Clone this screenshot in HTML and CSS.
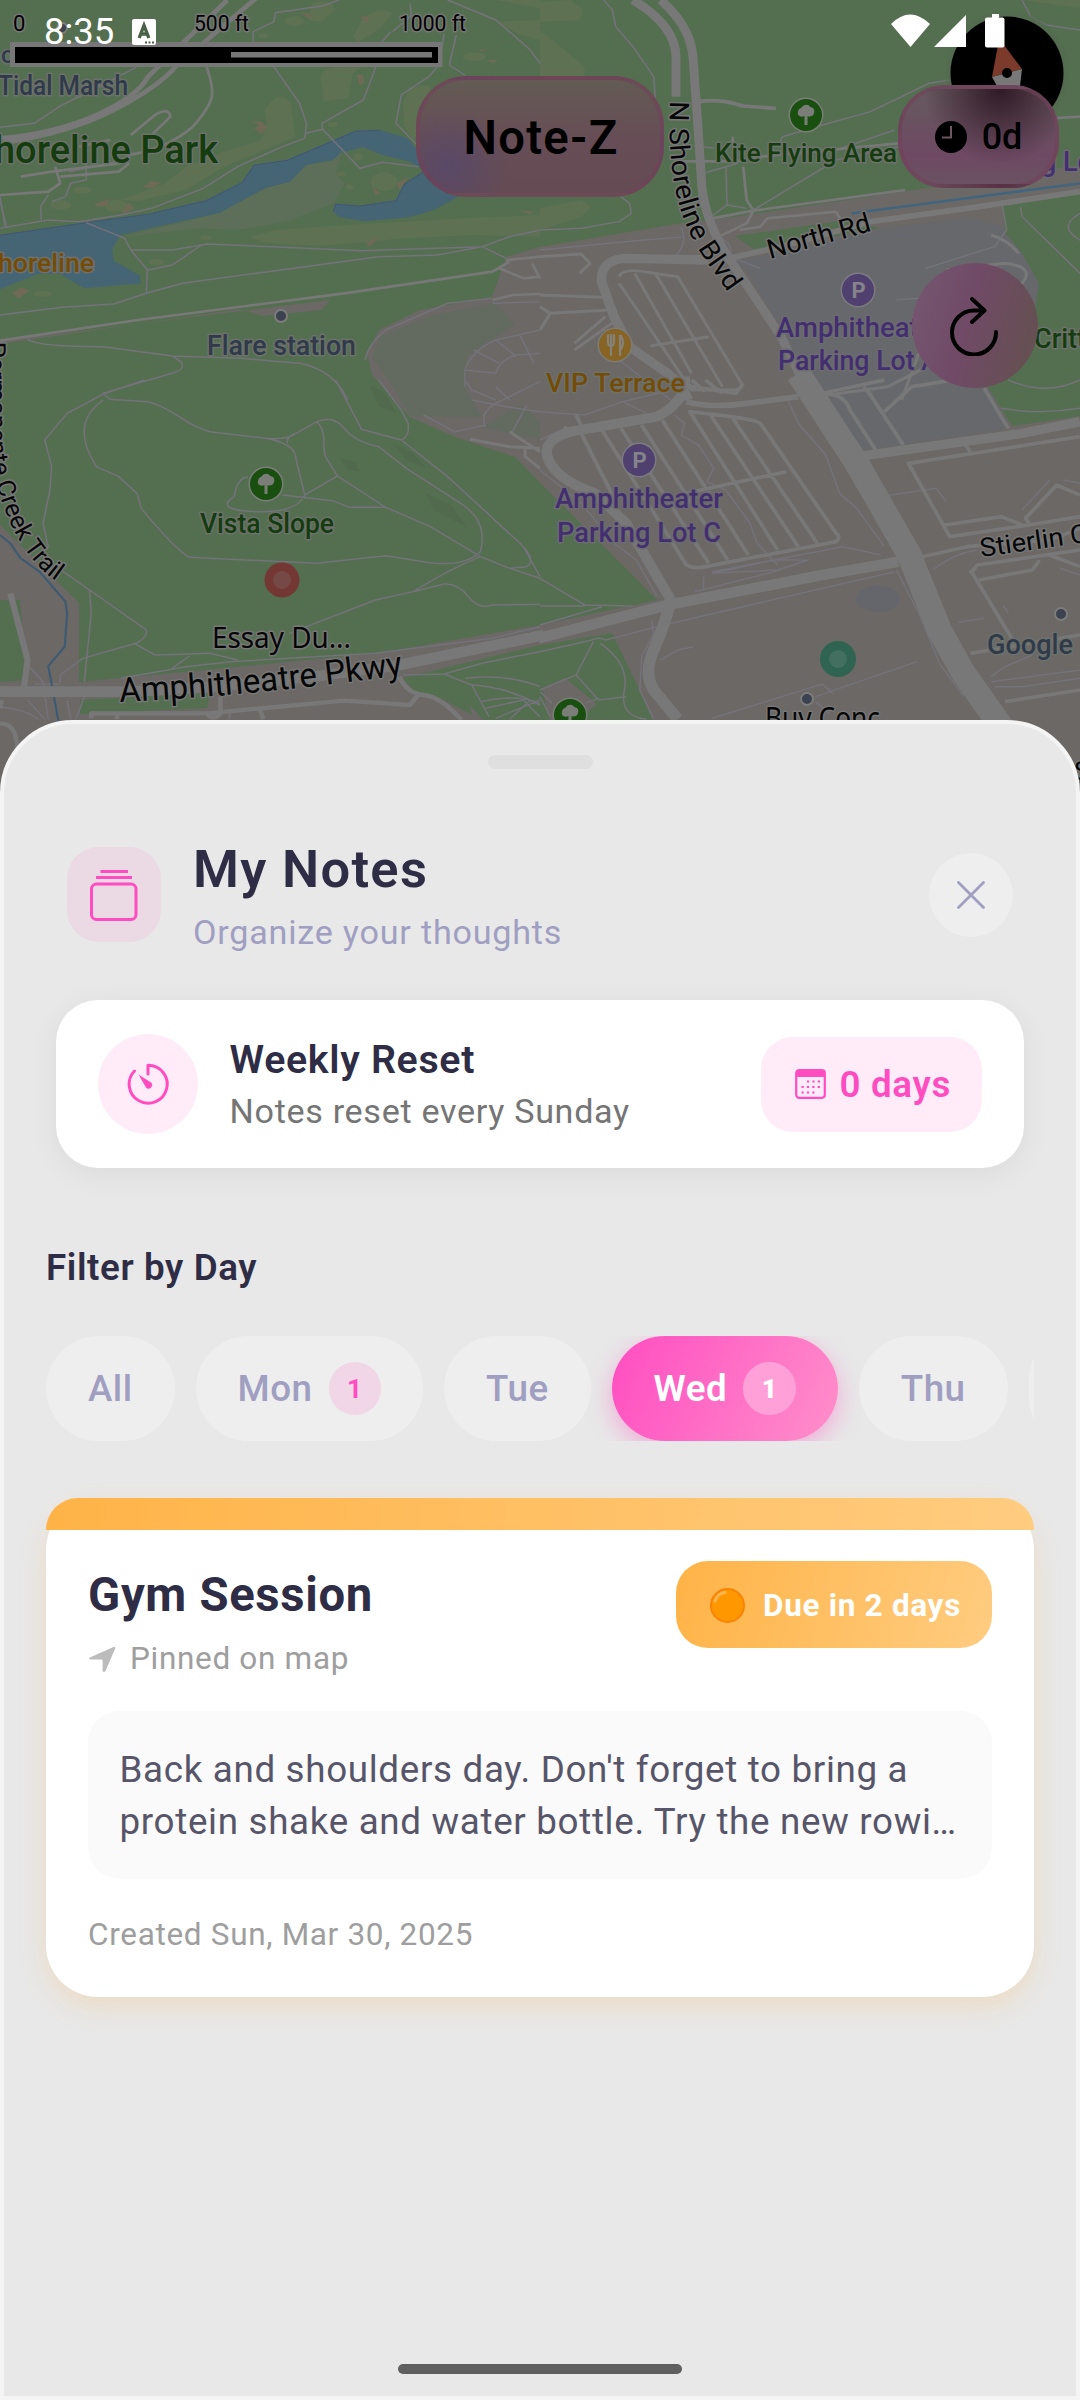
FILE: index.html
```html
<!DOCTYPE html>
<html lang="en">
<head>
<meta charset="utf-8">
<title>Note-Z</title>
<link rel="stylesheet" href="styles.css">
</head>
<body>
<div class="screen">
  <svg class="map" width="1080" height="800" viewBox="0 0 1080 800">
    <defs>
      <path id="blvd" d="M670 101C668 150 672 190 685 222S708 262 736 304"/>
      <path id="pkwy" d="M120 702C200 698 290 691 408 674"/>
      <path id="creek" d="M-13 290L-11 440C-9 480 12 552 56 581"/>
      <g id="tree"><circle r="17.5" fill="#7b7d79"/><circle r="16" fill="#1a500f"/><path d="M-1.5 10V1C-6 3-9 0-8-3-8-7-4-7-4-8-2-11 3-11 4-8 8-8 9-4 8-2 7 2 3 2 1.500 1V10z" fill="#7b7d79"/></g>
      <g id="park"><circle r="17.500" fill="#7b7b80"/><circle r="16" fill="#504070"/></g>
    </defs>
    <rect width="1080" height="800" fill="#546f50"/>

    <!-- built-up ground -->
    <g fill="#6b6865">
      <path d="M506 257L540 247 676 224 733 217 1080 165V800H485L470 705 415 692 403 678 120 682 0 682V525L79 603V682L379 653 540 625 657 600 540 483 515 457 455 437 410 417 372 375 367 352 379 330 420 310 492 297z"/>
      <path d="M0 682H80L403 678 485 722 490 800H0z"/>
      <path d="M0 341L330 300 322 310 262 316 240 309 0 344z"/>
    </g>
    <path d="M0 600L20 600 26 680 0 682z" fill="#546f50"/>
    <path d="M80 700L210 693 207 708 80 714z" fill="#546f50"/>
    <path d="M403 678L540 645 612 633 655 722H485L470 705 415 692z" fill="#546f50"/>
    <path d="M542 688L565 678 597 704 575 722H550z" fill="#6b6865"/>
    <path d="M735 236L840 221 880 228 755 250z" fill="#546f50"/>
    <path d="M735 262L885 228 970 218 1005 227 1022 250 1039 283 1040 320 988 387 1010 428 855 452 745 268z" fill="#66686b"/>
    <path d="M1002 203L1080 193V416L1012 426 988 387 1030 340 1039 283 1022 253 1005 233z" fill="#546f50"/>
    <path d="M380 337L430 316 496 303 515 325 468 355 466 390 482 417 410 416 392 385 372 358z" fill="#636b61"/>
    <path d="M482 427L520 405 540 420V440L511 433z" fill="#636b61"/>
    <ellipse cx="878" cy="599" rx="22" ry="13" fill="#64666b"/>

    <!-- water -->
    <g transform="scale(.34436 .33333)">
      <path d="M0 706L250 668 430 643 598 602 704 547 738 496 835 481 966 423 1032 394 1105 391 1180 413 1240 480 1340 585 1260 630 1188 652 1060 664 985 652 968 635 975 613 1045 618 1150 602 1175 552 1235 512 1190 485 1110 465 1055 442 1000 455 965 480 890 495 842 546 770 565 640 638 350 705 326 748 330 782 405 826 410 850 245 865 175 822 110 822 0 868z" fill="#456474"/>
      <path d="M995 450L968 482 890 495 842 546 770 565 640 638 360 710 580 685 690 690 830 665 970 610 1000 550 975 520z" fill="#5d6f59"/>
      <g fill="#5e7153">
        <path d="M770 330Q810 260 845 310L858 410 780 445 650 500 540 570 400 603 350 600 480 550 540 500 650 455 760 420 775 370z"/>
        <path d="M930 230Q935 200 1000 200L1060 195 1025 220 1010 295 940 303z"/>
        <path d="M1050 60Q1100 15 1140 40L1100 90 1040 125 1025 110z"/>
        <path d="M1170 310Q1190 240 1250 260L1230 370 1200 420 1175 380z"/>
        <path d="M725 712L800 690 1050 672 1350 655 1568 645V710L1370 705 1180 715 930 738 770 728z"/>
        <path d="M905 10Q960-10 972 30L935 65 895 60z"/>
        <path d="M1445 65L1568 60V120L1500 100z"/>
        <path d="M1440 0H1568V25z"/>
        <ellipse cx="176" cy="615" rx="32" ry="14"/><ellipse cx="337" cy="617" rx="34" ry="18"/><ellipse cx="1115" cy="545" rx="38" ry="28"/><ellipse cx="238" cy="570" rx="28" ry="10"/><ellipse cx="855" cy="63" rx="28" ry="15"/><ellipse cx="1378" cy="170" rx="34" ry="13"/><ellipse cx="598" cy="713" rx="18" ry="7"/><ellipse cx="455" cy="786" rx="22" ry="9"/><ellipse cx="123" cy="882" rx="27" ry="9"/><ellipse cx="967" cy="374" rx="15" ry="7"/><ellipse cx="1040" cy="470" rx="13" ry="11"/><ellipse cx="990" cy="522" rx="14" ry="7"/><ellipse cx="1015" cy="561" rx="13" ry="8"/><ellipse cx="765" cy="107" rx="14" ry="8"/>
      </g>
      <g fill="#6e6a56">
        <path d="M272 612L318 597 310 617 285 620zM352 635L375 608 390 625 365 640zM415 560L440 543 468 548 440 565zM727 362L760 365 775 380 760 402 738 385 752 375zM1035 225L1055 225 1058 245 1045 258zM1045 50L1072 48 1068 70zM870 35L910 45 895 55zM1385 150L1415 148 1400 155zM1415 180L1448 180 1430 190zM1080 560L1105 580 1090 585zM1150 550L1188 530 1160 570zM1062 725L1102 712 1075 740zM35 880L60 862 87 872 55 895zM1510 630L1555 635 1535 643z"/>
      </g>
      <path d="M0 706L250 668 430 643 598 602 704 547 738 496 835 481 966 423 1032 394 1105 391M968 635L975 613 1045 618 1150 602 1175 552 1235 512" fill="none" stroke="#41567a" stroke-width="3"/>

      <!-- footpaths -->
      <g class="path">
        <path d="M0 382L100 370 180 315 270 270 395 202M795 200L870 310 890 370 885 415 820 440 690 500 590 565 440 625 350 645 230 665 140 660 0 685"/>
        <path d="M888 400L937 388 935 370 1055 300 1090 205M985 0L935 18 800 38 795 65 735 95 735 125M1135 95L1088 150 1090 205M1190 10L1195 45 1140 95M1325 105L1305 195 1350 225M1300 0L1440 60 1540 150 1568 190M1290 100L1275 195 1245 230 1165 285 1150 370 1225 450M937 388L1045 505 1110 487 1215 500"/>
        <path d="M120 660L118 620 140 585M150 605L190 590 205 550 250 540M0 590L15 680M250 668L362 715 380 750 428 810 425 880M380 750L500 750 600 732 1050 752 1400 740 1480 710 1568 690M585 735L500 795 430 810M0 945L180 922 330 912 425 880 530 850 1100 770 1270 765 1400 740 1470 775"/>
        <path d="M80 1018Q110 1040 300 1040L500 1068Q560 1100 500 1120L300 1180M500 1068L700 1075 870 1090Q970 1110 1010 1200M1060 1080Q1070 1030 1120 990L1300 910 1430 895M1350 1110Q1370 1050 1440 1020L1568 990M1350 1110V1160M1440 1120Q1450 1080 1500 1065L1568 1060M1350 1110L1440 1120M1375 1050L1450 1090M1440 1020L1500 1070M1510 1005L1550 1090M1430 910L1568 905"/>
        <path d="M250 440V540M0 600L20 685M360 480L200 515"/>
      </g>
      <g class="road">
        <path d="M0 415Q160 400 280 345T430 230L660 0M0 430Q200 400 330 330T510 200L760-20" stroke-width="14"/>
        <path d="M600 200Q620 260 615 290T560 380Q480 450 370 465M380 405L450 345Q490 320 495 350L430 415M60 530L150 515 345 490Q390 480 370 440M0 585L140 575 175 550 160 500M175 530L345 515 375 490M230 440L320 420" stroke-width="8"/>
        <path d="M0 1022L400 960 1000 880 1430 815 1480 785M1470 780L1568 770M1450 805L1520 835 1568 830M1545 790L1568 835M1430 900L1490 885 1568 882" stroke-width="8"/>
      </g>
    </g>

    <!-- north-east quarter -->
    <g transform="translate(540 0) scale(.34436 .33333)">
      <g fill="#5e7153"><path d="M0 5L90 0 125 30 115 60 0 65zM0 90L130 200 130 228 0 228zM0 625L120 600 150 620 120 650 0 690z"/><path d="M860 0H1568V25L1400 0z"/></g>
      <g class="path">
        <path d="M185 0L210 30 220 80 270 140 330 230 335 300M1190 240L1130 250 960 335 820 375 705 410 690 440M0 690L120 685 230 665 265 640 260 610 235 590M470 440L505 445M475 520L540 500 575 490M620 630L860 480 1040 440M1400 0L1425 50 1470 75 1568 90M540 500L543 615 490 655M543 615L600 625M860 450L1030 390M0 750L300 720 410 712M395 765Q430 730 410 680M500 700Q570 730 550 770L640 805M1340 600L1355 690 1320 740 1120 805M1395 620L1400 650 1568 820M1568 640Q1500 680 1568 720M1035 900L1100 895M1360 1140Q1470 1190 1568 1140M230 1080L380 1200"/>
      </g>
      <path d="M905 640L1568 550" stroke="#3f6580" stroke-width="7" fill="none"/>
      <g class="road">
        <path d="M270 0Q400 80 395 180L395 290M350 0Q440 80 445 180L460 400 470 560Q480 660 540 760L700 1010 800 1220" stroke-width="26"/>
        <path d="M460 305Q520 295 590 318L685 325" stroke-width="11"/>
        <path d="M410 484H570L640 470 1040 430M590 500L600 600 620 632 600 670 520 710M500 655L620 632 1060 570M1480 355L1568 350M860 635L870 655M560 410V440M580 690L640 680 660 655 860 635" stroke-width="8"/>
        <path d="M550 775L700 740 960 665 1240 625 1568 575" stroke-width="17"/>
        <path d="M490 780L250 775Q170 780 180 850L215 950 260 1040 370 1120Q420 1160 430 1200" stroke-width="28"/>
        <path d="M230 830Q240 800 330 820L400 830 585 1150Q590 1170 560 1170L440 1170 230 850M275 820L440 1120M335 820L530 1160M320 1038L490 1010M0 770L120 762 145 790 115 820M0 885L180 892M0 920L30 940 200 930M30 940L0 990M100 1030L190 950M215 965L100 1050M800 1190L1010 1160 1200 1060M1100 1060L1050 1200M1310 705Q1360 720 1390 760M1180 810L1350 790Q1440 800 1400 850L1300 840M940 1160L970 1200" stroke-width="9"/>
      </g>
    </g>

    <!-- south-west quarter -->
    <g transform="translate(0 380) scale(.34436 .33333)">
      <g fill="#51694c"><path d="M1075 15L1120 40 1150 98 1100 80zM1140 190L1200 220 1235 262 1180 240zM985 235L1030 245 1045 275 1010 268zM1235 340L1310 375 1355 440 1260 390z"/></g>
      <g class="path">
        <path d="M420 0L300 42 195 100 130 180 150 260 145 330 125 430 140 500 120 520M300 42L320 58 430 65Q470 75 520 110T610 155L770 175Q840 180 860 160L920 125Q970 105 1000 145T1100 200L1180 265 1330 365Q1420 420 1395 515Q1350 560 1250 548L1120 527 920 550 550 532Q510 510 410 385L398 340 345 290 280 260Q200 130 300 60M770 175Q860 190 860 240L885 345Q860 400 740 395T680 350Q690 290 720 292M835 190Q830 170 860 160M920 125Q945 150 940 200 L945 230 980 288 885 345M820 345L965 362 1015 382 1120 382M980 288L1120 382 1250 440 1395 530 1480 565 1568 595M975 0L1000 50 1050 148 1165 180Q1190 170 1185 130L1165 90 1100 0M1165 180L1300 290 1510 490Q1560 540 1530 560L1480 565M1520 500L1568 590M1395 530Q1300 570 1200 635L1090 660 890 740 840 760M1200 635L1290 612Q1330 610 1360 650 T1430 675L1568 673M170 565L260 630 425 750Q430 770 395 790L240 835 175 885V910M390 790L450 825 610 820 690 840M500 865L550 828M260 630L265 700 245 905M350 895L540 860 670 845 1090 820 1430 775 1568 740M1170 885L1290 882 1400 850 1568 815M1290 882L1370 915 1420 1010M1370 915Q1470 920 1568 975M1350 895Q1470 880 1568 920M1395 965Q1500 940 1568 970M1410 985L1520 960 1568 1010M1440 1015L1568 960M1480 1018L1540 960"/>
        <path d="M85 860L125 905 140 1018M80 960L130 1018M0 980Q80 990 110 1018M195 960L205 1018M245 950L220 1018M100 912L170 912M670 990L665 1018"/>
        <path d="M1230 105L1320 155 1410 135M1350 0L1370 30 1440 60M1410 140Q1390 100 1440 70L1568 5M1370 60L1470 80 1568 95M1485 160L1530 75M1440 20L1480 60"/>
      </g>
      <path d="M0 465L30 490 60 535 115 575 190 665 195 700 188 800 140 858 155 940 170 1025" stroke="#3c5a74" stroke-width="6" fill="none"/>
      <g class="road">
        <path d="M0 935H360Q700 925 1160 855L1580 765" stroke-width="32"/>
        <path d="M30 640L80 840 70 920" stroke-width="18"/>
        <path d="M265 1015V1000H600L1000 962 1190 975 1215 945M640 950V1000Q620 1025 600 1000M1160 890Q1180 940 1230 945 T1340 1020M755 990L765 1018M340 1000V1018M5 960L0 985M0 1030Q50 1030 50 1110" stroke-width="13"/>
        <path d="M1365 178L1480 200 1568 205M1480 155L1568 215M1525 205V230L1568 265" stroke-width="9"/>
      </g>
    </g>

    <!-- south-east quarter -->
    <g transform="translate(540 380) scale(.34436 .33333)">
      <g class="path">
        <path d="M0 95L130 105 240 65 360 35M240 65L310 100M0 180L60 150M0 270L120 370 215 490 280 540 340 650M0 595L130 675 270 678M0 678H130M0 735L180 680M390 105L420 130 410 165 460 195 505 265 485 305 540 330 610 430 630 490 690 555M720 60L750 130 830 225 870 340 920 385 1000 500M500 580L680 540 780 540 690 570 500 580M475 590V630M450 635L700 570M500 575L880 500 990 525M0 815L150 780Q170 770 190 780L360 735 1030 575M155 785L105 885 0 930M105 885L170 960 250 950M175 790Q260 850 245 930T310 1018M0 935L35 970M0 950L30 1010M130 970L170 955M325 720L330 760 295 830 290 930 330 1018M350 840L400 810 445 800M500 1015L820 912 850 940M800 950L1095 845M800 965L840 1000M1035 570L1050 600 1100 700 1160 850 1230 950M1215 727L1290 715M1140 570Q1200 520 1270 510M1005 347L1150 325 1180 365M1345 675L1360 700M1480 300L1400 390M1520 300L1568 310M1510 565L1568 585M1310 890L1350 860 1430 825M1310 905L1568 870M1320 920H1400L1568 895M1340 85Q1450 105 1568 85"/>
      </g>
      <g class="road">
        <path d="M750-20L920 250 1070 520 1160 750 1230 880 1340 1040" stroke-width="72"/>
        <path d="M-5 775L370 675 820 585 1040 545" stroke-width="32"/>
        <path d="M375 680Q360 740 330 810 T330 930L400 1018" stroke-width="34"/>
        <path d="M420-10Q430 60 340 110L90 155Q0 180 25 240T160 340L250 430 380 660" stroke-width="30"/>
        <path d="M920 230L1400 160 1568 125" stroke-width="28"/>
        <path d="M425 65Q500 85 600 70L750 50" stroke-width="17"/>
        <path d="M105 105L125 150M70 140L80 150M120 160L220 365M180 150L425 555Q440 565 470 562L860 485Q875 470 860 460L640 130Q620 115 430 95M235 145L490 550M295 135L545 540M355 120L605 525M435 95L690 510M495 105L750 500M560 115L805 490M400 345L715 275M400 0L440 20 570 40 590 10M480 0L530 40M440 0L480 35M800 45Q880 30 900 90L975 210M950 30L1055 195M1000 95L1080 20 1200 0M820 40L1000 0M1290 25L1360 145M1235 195L1250 215M1568 170L1070 250 1190 470 1420 435 1568 410M1175 435L1340 410 1400 435M1420 430L1410 415 1500 315 1568 345M1110 530L1240 500 1480 480 1568 445M1250 580L1270 555 1568 510M1250 570L1370 775M1275 600L1430 570 1450 540M1480 525L1568 560M1250 820L1568 765M1350 965L1568 930" stroke-width="11"/>
      </g>
    </g>

    <!-- labels -->
    <g class="lbl blue" font-size="27">
      <text x="-2" y="95" textLength="130" lengthAdjust="spacingAndGlyphs">Tidal Marsh</text>
      <text x="1" y="63" font-size="24">o</text>
      <text x="207" y="355" textLength="149" lengthAdjust="spacingAndGlyphs">Flare station</text>
      <text x="987" y="654" textLength="86" lengthAdjust="spacingAndGlyphs">Google</text>
    </g>
    <g class="lbl green">
      <text x="-6" y="163" font-size="38" textLength="224" lengthAdjust="spacingAndGlyphs">horeline Park</text>
      <text x="715" y="162" font-size="26" textLength="182" lengthAdjust="spacingAndGlyphs">Kite Flying Area</text>
      <text x="200" y="533" font-size="27" textLength="134" lengthAdjust="spacingAndGlyphs">Vista Slope</text>
      <text x="1034" y="348" font-size="27">Critters</text>
    </g>
    <g class="lbl gold" font-size="26">
      <text x="-2" y="272" textLength="96" lengthAdjust="spacingAndGlyphs">horeline</text>
      <text x="546" y="392" textLength="139" lengthAdjust="spacingAndGlyphs">VIP Terrace</text>
    </g>
    <g class="lbl purple" font-size="27">
      <text x="776" y="337" textLength="167" lengthAdjust="spacingAndGlyphs">Amphitheater</text>
      <text x="778" y="370" textLength="161" lengthAdjust="spacingAndGlyphs">Parking Lot A</text>
      <text x="555" y="508" textLength="168" lengthAdjust="spacingAndGlyphs">Amphitheater</text>
      <text x="557" y="542" textLength="164" lengthAdjust="spacingAndGlyphs">Parking Lot C</text>
      <text x="1041" y="171">g Lot</text>
    </g>
    <g class="lbl ink">
      <text font-size="27"><textPath href="#blvd" textLength="206" lengthAdjust="spacingAndGlyphs">N Shoreline Blvd</textPath></text>
      <text x="770" y="259" font-size="27" textLength="106" lengthAdjust="spacingAndGlyphs" transform="rotate(-15.500 770 259)">North Rd</text>
      <text x="981" y="557" font-size="26" textLength="118" lengthAdjust="spacingAndGlyphs" transform="rotate(-8 981 557)">Stierlin Ct</text>
      <text font-size="34"><textPath href="#pkwy" textLength="285" lengthAdjust="spacingAndGlyphs">Amphitheatre Pkwy</textPath></text>
      <text font-size="25" text-anchor="end"><textPath href="#creek" startOffset="100%">Permanente Creek Trail</textPath></text>
      <text class="sans" x="212" y="648" font-size="29" textLength="139" lengthAdjust="spacingAndGlyphs">Essay Du...</text>
      <text class="sans" x="765" y="729" font-size="30" textLength="136" lengthAdjust="spacingAndGlyphs">Buy Conc...</text>
      <text x="1074" y="780" font-size="26">S</text>
    </g>

    <!-- points of interest -->
    <g stroke="#7c7c7a" stroke-width="2" fill="#3b4250"><circle cx="281" cy="316" r="6"/><circle cx="1061" cy="614" r="6"/><circle cx="807" cy="699" r="6"/><circle cx="62" cy="28" r="5"/></g>
    <use href="#tree" x="806" y="115"/><use href="#tree" x="266" y="484"/><use href="#tree" x="570" y="715"/>
    <use href="#park" x="858" y="290"/><use href="#park" x="639" y="460"/>
    <g fill="#84848a" font-family="Roboto" font-weight="700" font-size="22" text-anchor="middle"><text x="859" y="298">P</text><text x="640" y="468">P</text></g>
    <circle cx="615" cy="345" r="17.500" fill="#7b7b78"/><circle cx="615" cy="345" r="16" fill="#876423"/>
    <path d="M608 335V342Q608 346 611 346V355M611 335V346M614 335V342Q614 346 611 346M620 336V355M621 336Q625 343 621 349" fill="none" stroke="#85827c" stroke-width="2.200" stroke-linecap="round"/>
    <circle cx="282" cy="580" r="17.500" fill="#743834"/><circle cx="282" cy="580" r="9" fill="#754a46"/>
    <circle cx="838" cy="659" r="18" fill="#2f6453"/><circle cx="838" cy="659" r="9" fill="#436f61"/>

    <!-- compass -->
    <circle cx="1007" cy="73" r="62" fill="#546b50" opacity=".6"/>
    <circle cx="1007" cy="73" r="56.500" fill="#000"/>
    <path d="M998 45L1004 45 1022 69 992 77z" fill="#7c3a2b"/><path d="M992 77L1022 69 1019 95H1002z" fill="#787878"/><circle cx="1007" cy="73" r="5" fill="#000"/>

    <!-- scale bar -->
    <rect x="10" y="42" width="432.500" height="25" fill="#777"/><rect x="15" y="47" width="423" height="16" fill="#000"/><rect x="231" y="52" width="201" height="5.500" fill="#777"/>
    <g class="lbl tick" font-size="22"><text x="13" y="31">0</text><text x="194" y="31" textLength="55" lengthAdjust="spacingAndGlyphs">500 ft</text><text x="399" y="31" textLength="67" lengthAdjust="spacingAndGlyphs">1000 ft</text></g>
  </svg>

  <div class="pill brand">Note-Z</div>
  <div class="pill days">
    <svg width="32" height="32" viewBox="0 0 32 32"><circle cx="16" cy="16" r="16"/><path d="M16 5V16.500H7" fill="none" stroke="#705562" stroke-width="2"/></svg>
    <span>0d</span>
  </div>
  <div class="refresh">
    <svg width="48" height="60" viewBox="0 0 48 60" fill="none" stroke="#000" stroke-width="4" stroke-linecap="round" stroke-linejoin="round"><path d="M34 14.500H24A22 22 0 1 0 46 36M22 3L34.500 14.500 22 26"/></svg>
  </div>

  <div class="status">
    <span class="clock">8:35</span>
    <svg class="note" width="24" height="26" viewBox="0 0 24 26"><rect width="24" height="26" rx="2" fill="#fff"/><path d="M7.200 19L12 6.500 16.800 19M9 15H15" fill="none" stroke="#4a6146" stroke-width="3.400"/><path d="M13 23.500h2m1.500 0h2m1.500 0h2" stroke="#4a6146" stroke-width="2"/></svg>
    <svg class="radio" width="116" height="36" viewBox="0 0 116 36" fill="#fff"><path d="M1 10Q20-9 40 10L20.500 33z"/><path d="M44 33L76 1V33z"/><path d="M102 0h7v3.500h3.500q2 0 2 2V31.500q0 2-2 2H97q-2 0-2-2V5.500q0-2 2-2h5z"/></svg>
  </div>

  <main class="sheet">
    <div class="handle"></div>
    <header class="head">
      <div class="tile">
        <svg width="48" height="52" viewBox="0 0 48 52" fill="none" stroke="#ff4dc1" stroke-width="3"><rect x="1.500" y="15" width="44.500" height="35.500" rx="5"/><path d="M6 8.500H42M10.500 2.500H38" /></svg>
      </div>
      <div class="titles"><h1>My Notes</h1><p>Organize your thoughts</p></div>
      <div class="close"><svg width="28" height="28" viewBox="0 0 28 28" stroke="#a09fc2" stroke-width="2.800" stroke-linecap="round"><path d="M1.500 1.500L26.500 26.500M26.500 1.500L1.500 26.500"/></svg></div>
    </header>

    <section class="reset">
      <div class="dial"><svg width="42" height="42" viewBox="0 0 42 42"><path d="M21 11V2.200A19 19 0 1 1 7.500 8" fill="none" stroke="#ff4dc1" stroke-width="3" stroke-linecap="round" stroke-linejoin="round"/><path d="M11.500 11.500L24 19.500A3.500 3.500 0 0 1 19 24.500z" fill="#ff4dc1"/></svg></div>
      <div class="copy"><h2>Weekly Reset</h2><p>Notes reset every Sunday</p></div>
      <div class="left">
        <svg width="31" height="30" viewBox="0 0 31 30"><rect x="1.200" y="1.200" width="28.600" height="27.600" rx="3" fill="none" stroke="#ff4dc1" stroke-width="2.200"/><rect x="1" y="1" width="29" height="7" rx="2" fill="#ff4dc1"/><path d="M12 12.500h14M6.500 18h19.500M6.500 23.500h14" stroke="#ff4dc1" stroke-width="2.200" stroke-dasharray="2.200 3.200"/></svg>
        <span>0 days</span>
      </div>
    </section>

    <h3 class="label">Filter by Day</h3>
    <div class="chips">
      <div class="chip">All</div>
      <div class="chip">Mon<b>1</b></div>
      <div class="chip">Tue</div>
      <div class="chip on">Wed<b>1</b></div>
      <div class="chip">Thu</div>
      <div class="chip"></div>
    </div>

    <article class="card">
      <div class="stripe"></div>
      <div class="body">
        <div class="top">
          <div>
            <h2>Gym Session</h2>
            <div class="pin"><svg width="28" height="27" viewBox="0 0 28 27"><path d="M1.800 11.500L25.500.9Q27.800.2 27.200 2.500L17.500 25Q15.800 27 14.600 25V14.500Q14.600 13.500 13.500 13.500H2.500Q.2 12.800 1.800 11.500z" fill="#bcbcbc"/></svg><span>Pinned on map</span></div>
          </div>
          <div class="due"><svg width="35" height="35" viewBox="0 0 35 35"><circle cx="17.500" cy="17.500" r="16.500" fill="#ff9800" stroke="#fa8304" stroke-width="2"/><path d="M5 13Q8 5 15 4.500" fill="none" stroke="#ffb74d" stroke-width="3" stroke-linecap="round"/></svg><span>Due in 2 days</span></div>
        </div>
        <p class="text">Back and shoulders day. Don't forget to bring a<br>protein shake and water bottle. Try the new rowi…</p>
        <p class="created">Created Sun, Mar 30, 2025</p>
      </div>
    </article>
  </main>
  <div class="home"></div>
</div>
</body>
</html>
```
FILE: styles.css
```css
* { box-sizing: border-box; margin: 0; }
body { font-family: Roboto, "Liberation Sans", sans-serif; letter-spacing: .68px; color: #2e2d45; }
svg { display: block; flex: none; }
.screen { position: relative; width: 1080px; height: 2400px; overflow: hidden; background: #6b6865; }

/* map */
.map { position: absolute; inset: 0 0 auto 0; }
.map .path path { fill: none; stroke: #74727a; stroke-width: 4.500; }
.map .road path { fill: none; stroke: #787878; stroke-linejoin: round; }
.lbl { font-family: Roboto, sans-serif; font-weight: 500; letter-spacing: 0; paint-order: stroke; stroke: #6d716c; stroke-width: 3px; stroke-linejoin: round; }
.lbl.blue { fill: #2f3a4a; }
.lbl.green { fill: #143c0e; }
.lbl.gold { fill: #744c08; }
.lbl.purple { fill: #432f70; stroke: #6c6c70; }
.lbl.ink { fill: #060606; stroke: #777; font-weight: 400; }
.lbl.tick { fill: #000; stroke: #777; font-weight: 400; }
.lbl .sans { font-family: "Noto Sans", sans-serif; }

.pill { position: absolute; display: flex; align-items: center; justify-content: center; color: #000; border: 4px solid rgba(115, 65, 90, .6); }
.brand { left: 416px; top: 76px; width: 248px; height: 121px; padding: 3px 0 0 2px; border-radius: 50px; font-size: 47.25px; font-weight: 600; letter-spacing: 1.300px; background: radial-gradient(circle at 12% 76%, rgba(86, 72, 108, .8) 0, rgba(86, 72, 108, 0) 26%), linear-gradient(180deg, #635b54, #674e56 50%, #644b54); }
.days { left: 898px; top: 85px; width: 161px; height: 103px; border-radius: 46px; gap: 15px; font-size: 36px; font-weight: 500; letter-spacing: 0; background: radial-gradient(ellipse at 64% 0, #2f1926 0, rgba(60, 35, 50, .6) 28%, rgba(80, 60, 70, 0) 55%), linear-gradient(180deg, #655a5e, #6e4963 70%, #6a5262); }
.refresh { position: absolute; left: 912px; top: 263px; width: 126px; height: 125px; border-radius: 50%; background: linear-gradient(105deg, #74546e 10%, #704a66 45%, #655052 90%); }
.refresh svg { margin: 33px 0 0 38px; }

/* system bars */
.status { position: absolute; left: 0; right: 0; top: 0; height: 62px; display: flex; align-items: flex-start; padding: 14px 74px 0 44px; color: #fff; }
.clock { width: 88px; font-size: 36.500px; line-height: 36px; letter-spacing: 0; }
.note { margin-top: 5px; }
.radio { margin-left: auto; }
.home { position: absolute; left: 398px; top: 2364px; width: 284px; height: 10px; border-radius: 5px; background: #5f5f5f; }

/* sheet */
.sheet { position: absolute; left: 0; right: 0; top: 720px; bottom: 0; padding: 31px 42px 0; border: 4px solid #f4f4f4; border-radius: 73px 73px 0 0; background: #e8e8e8; }
.handle { width: 105px; height: 14px; margin: 0 auto; border-radius: 7px; background: #dfdfdf; }
.head { display: flex; align-items: center; height: 115px; margin: 68px 21px 0; }
.tile { display: flex; align-items: center; justify-content: center; width: 94px; height: 95px; border-radius: 32px; background: #ebd9e4; }
.titles { flex: 1; padding-left: 32px; }
.titles h1 { font-size: 52.500px; line-height: 64px; font-weight: 600; margin-bottom: 11px; letter-spacing: 1.300px; }
.titles p { font-size: 34.125px; line-height: 40px; color: #a09fc2; letter-spacing: .79px; }
.close { display: flex; align-items: center; justify-content: center; width: 84px; height: 84px; border-radius: 50%; background: #eee; }

.reset { display: flex; align-items: center; height: 168px; margin: 48px 10px 0; padding: 0 42px; border-radius: 42px; background: #fff; box-shadow: 0 6px 30px rgba(0, 0, 0, .06); }
.dial { display: flex; align-items: center; justify-content: center; width: 100px; height: 100px; border-radius: 50%; background: #ffecf8; }
.copy { flex: 1; padding: 2px 0 0 31.500px; }
.copy h2 { font-size: 39.375px; line-height: 46px; font-weight: 600; margin-bottom: 6px; }
.copy p { font-size: 34.125px; line-height: 44px; color: #757575; }
.left { display: flex; align-items: center; gap: 13px; height: 95px; padding: 0 31px 0 34px; border-radius: 32px; background: #ffecf8; color: #ff4dc1; font-size: 36.750px; font-weight: 600; }

.label { margin-top: 78px; font-size: 36.750px; line-height: 44px; font-weight: 600; letter-spacing: .6px; }
.chips { display: flex; gap: 21px; height: 105px; margin-top: 46px; overflow: hidden; }
.chip { display: flex; flex: none; align-items: center; gap: 16px; padding: 0 42px; border-radius: 52.500px; background: #eee; color: #a09fc2; font-size: 36.750px; font-weight: 500; letter-spacing: .5px; }
.chip b { display: flex; align-items: center; justify-content: center; width: 52.500px; height: 52.500px; border-radius: 50%; background: #f0d6e7; color: #ff4dc1; font-size: 26.250px; }
.chip.on { color: #fff; font-weight: 600; background: linear-gradient(115deg, #ff4dc1, #ff8fca); box-shadow: 0 8px 24px rgba(255, 77, 193, .4); }
.chip.on b { background: #ffa0d8; color: #fff; }

.card { height: 499px; margin-top: 57px; border-radius: 52px; background: #fff; box-shadow: 0 10px 26px rgba(255, 179, 71, .22); }
.stripe { height: 32px; border-radius: 32px 32px 0 0; background: linear-gradient(90deg, #ffb347, #ffcc80); }
.body { padding: 31px 42px 0; }
.top { display: flex; justify-content: space-between; align-items: flex-start; height: 150px; }
.top h2 { margin-top: 6px; font-size: 47.250px; line-height: 56px; font-weight: 700; }
.pin { display: flex; align-items: center; gap: 14px; margin-top: 17px; font-size: 31.500px; line-height: 38px; color: #9e9e9e; }
.due { display: flex; align-items: center; gap: 18px; height: 87px; padding: 1px 31px 0 34px; border-radius: 32px; background: linear-gradient(105deg, #ffb347, #ffcc80); color: #fff; font-size: 31.500px; font-weight: 700; }
.text { height: 168px; padding: 32.500px 31.500px 0; border-radius: 32px; background: #fafafa; font-size: 36.750px; line-height: 52.500px; color: #575569; white-space: nowrap; }
.created { margin-top: 37px; font-size: 31.500px; line-height: 38px; color: #9e9e9e; }
```
